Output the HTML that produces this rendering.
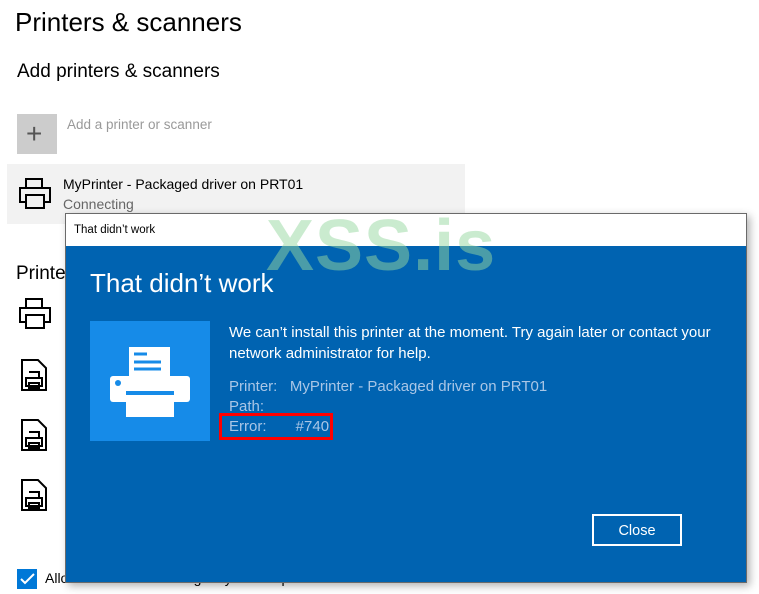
<!DOCTYPE html>
<html><head><style>
body{margin:0;width:759px;height:594px;background:#fff;font-family:"Liberation Sans",sans-serif;position:relative;overflow:hidden}
.a{position:absolute;white-space:nowrap}
</style></head><body>
<div class="a" style="left:15px;top:7px;font-size:26px;color:#000">Printers &amp; scanners</div>
<div class="a" style="left:17px;top:61px;font-size:19px;color:#000">Add printers &amp; scanners</div>
<div class="a" style="left:17px;top:114px;width:40px;height:40px;background:#ccc"></div>
<div class="a" style="left:26px;top:122px;font-size:28px;color:#555;font-weight:300;line-height:24px">+</div>
<div class="a" style="left:67px;top:117px;font-size:13.5px;color:#999">Add a printer or scanner</div>
<div class="a" style="left:7px;top:164px;width:458px;height:60px;background:#f2f2f2"></div>
<svg class="a" style="left:18px;top:178px" width="34" height="32" viewBox="0 0 34 32" fill="none" stroke="#000" stroke-width="2"><rect x="8" y="1" width="16" height="9"/><path d="M8 24H2V10h30v14h-6"/><rect x="8" y="17" width="18" height="13"/></svg>
<div class="a" style="left:63px;top:176px;font-size:14px;color:#000">MyPrinter - Packaged driver on PRT01</div>
<div class="a" style="left:63px;top:196px;font-size:14px;color:#666">Connecting</div>
<div class="a" style="left:16px;top:263px;font-size:19px;color:#000">Printers</div>
<svg class="a" style="left:18px;top:298px" width="34" height="32" viewBox="0 0 34 32" fill="none" stroke="#000" stroke-width="2"><rect x="8" y="1" width="16" height="9"/><path d="M8 24H2V10h30v14h-6"/><rect x="8" y="17" width="18" height="13"/></svg>
<svg class="a" style="left:20px;top:358px" width="28" height="34" viewBox="0 0 28 34" fill="none" stroke="#000" stroke-width="2"><path d="M2 2h16l8 8v22H2z"/><path d="M9 14h10v6M6 20h16v8H6zM9 25h10v5H9z"/></svg>
<svg class="a" style="left:20px;top:418px" width="28" height="34" viewBox="0 0 28 34" fill="none" stroke="#000" stroke-width="2"><path d="M2 2h16l8 8v22H2z"/><path d="M9 14h10v6M6 20h16v8H6zM9 25h10v5H9z"/></svg>
<svg class="a" style="left:20px;top:478px" width="28" height="34" viewBox="0 0 28 34" fill="none" stroke="#000" stroke-width="2"><path d="M2 2h16l8 8v22H2z"/><path d="M9 14h10v6M6 20h16v8H6zM9 25h10v5H9z"/></svg>
<div class="a" style="left:17px;top:569px;width:20px;height:20px;background:#0078d7"></div>
<svg class="a" style="left:17px;top:569px" width="20" height="20"><path d="M4 10l4 4 9-9" stroke="#fff" stroke-width="2" fill="none"/></svg>
<div class="a" style="left:45px;top:570px;font-size:14px;color:#000">Allow Windows to manage my default printer</div>

<div class="a" style="left:65px;top:213px;width:680px;height:368px;border:1px solid #6a6a6a;background:#0063b1;box-shadow:3px 3px 8px rgba(0,0,0,.3)">
<div style="height:32px;background:#fff"></div>
</div>
<div class="a" style="left:74px;top:224px;font-size:11.5px;color:#000">That didn’t work</div>
<div class="a" style="left:90px;top:268px;font-size:26px;color:#fff;font-weight:300">That didn’t work</div>
<div class="a" style="left:90px;top:321px;width:120px;height:120px;background:#168be8"></div>
<svg class="a" style="left:90px;top:321px" width="120" height="120"><rect x="39" y="26" width="41" height="32" fill="#fff"/><path d="M44 33h13M44 41h27M44 48h27" stroke="#168be8" stroke-width="3"/><rect x="20" y="55" width="80" height="26" rx="3" fill="#fff"/><circle cx="28" cy="62" r="3" fill="#168be8"/><rect x="36" y="72" width="48" height="24" fill="#fff"/><rect x="36" y="70" width="48" height="4" fill="#168be8"/></svg>
<div class="a" style="left:229px;top:322px;font-size:15px;color:#fff;line-height:21px">We can’t install this printer at the moment. Try again later or contact your<br>network administrator for help.</div>
<div class="a" style="left:229px;top:377px;font-size:15px;color:#a9c6e6;line-height:20px">Printer:&nbsp;&nbsp;&nbsp;MyPrinter - Packaged driver on PRT01<br>Path:<br>Error:&nbsp;&nbsp;&nbsp;&nbsp;&nbsp;&nbsp;&nbsp;#740</div>
<div class="a" style="left:219px;top:413px;width:108px;height:21px;border:3px solid #f00"></div>
<div class="a" style="left:592px;top:514px;width:86px;height:28px;border:2px solid #fff;color:#fff;font-size:14.5px;text-align:center;line-height:30px">Close</div>
<div class="a" style="left:266px;top:205px;font-size:72px;font-weight:bold;color:rgba(150,215,160,.5);letter-spacing:1px">XSS.is</div>
</body></html>
